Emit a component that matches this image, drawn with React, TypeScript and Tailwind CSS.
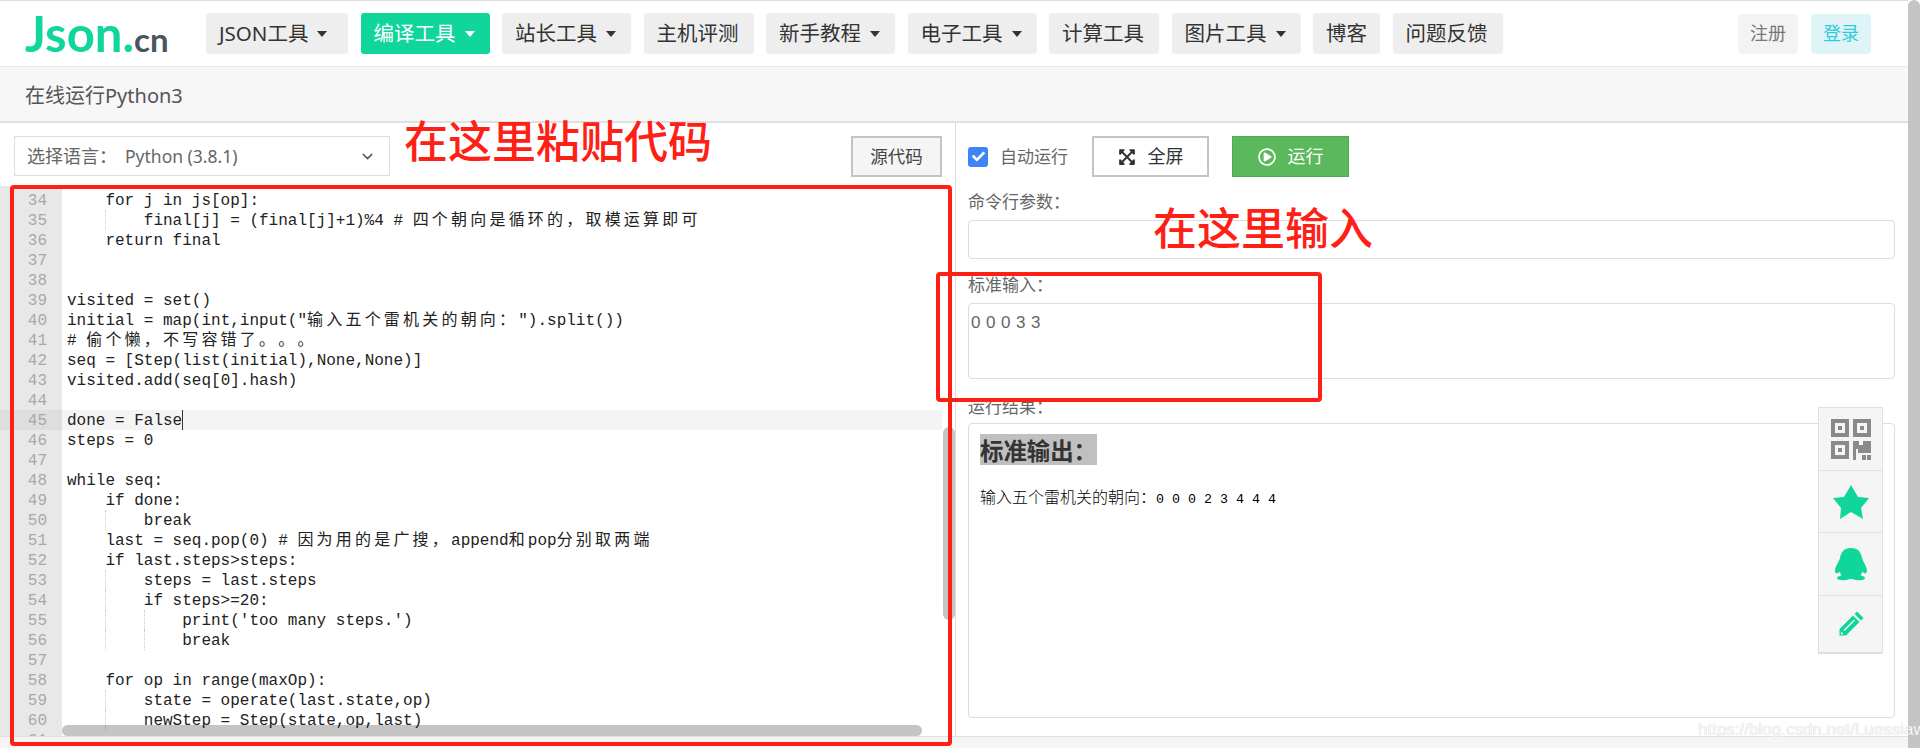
import { FaExpandArrowsAlt, FaRegPlayCircle, FaCheck } from "react-icons/fa";
import { ChevronDown } from "lucide-react";

const NAV = [
  { label: "JSON工具", caret: true, width: "w-[142px]" },
  { label: "编译工具", caret: true, active: true, width: "w-[129px]" },
  { label: "站长工具", caret: true, width: "w-[129px]" },
  { label: "主机评测", width: "w-[110px]" },
  { label: "新手教程", caret: true, width: "w-[129px]" },
  { label: "电子工具", caret: true, width: "w-[129px]" },
  { label: "计算工具", width: "w-[110px]" },
  { label: "图片工具", caret: true, width: "w-[129px]" },
  { label: "博客", width: "w-[67px]" },
  { label: "问题反馈", width: "w-[110px]" },
];

const CODE = [
  "    final = state.copy()",
  "    for j in js[op]:",
  "        final[j] = (final[j]+1)%4 # 四个朝向是循环的，取模运算即可",
  "    return final",
  "",
  "",
  "visited = set()",
  'initial = map(int,input("输入五个雷机关的朝向：").split())',
  "# 偷个懒，不写容错了。。。",
  "seq = [Step(list(initial),None,None)]",
  "visited.add(seq[0].hash)",
  "",
  "done = False",
  "steps = 0",
  "",
  "while seq:",
  "    if done:",
  "        break",
  "    last = seq.pop(0) # 因为用的是广搜，append和pop分别取两端",
  "    if last.steps>steps:",
  "        steps = last.steps",
  "        if steps>=20:",
  "            print('too many steps.')",
  "            break",
  "",
  "    for op in range(maxOp):",
  "        state = operate(last.state,op)",
  "        newStep = Step(state,op,last)",
  "",
];

function CodeText({ text }: { text: string }) {
  const parts = text.split(/([\u3000-\u9fff\uff00-\uffef]+)/);
  return (
    <>
      {parts.map((part, i) =>
        i % 2 === 1 ? (
          <span
            key={i}
            className="font-['Noto_Sans_CJK_SC',sans-serif] leading-none tracking-[3.2px] [text-spacing-trim:space-all]"
          >
            {part}
          </span>
        ) : (
          <span key={i}>{part}</span>
        ),
      )}
    </>
  );
}

function CodeLine({ num, text }: { num: number; text: string }) {
  const active = num === 45;
  const indent = text.length - text.trimStart().length;
  const levels = Math.floor(indent / 4);
  return (
    <div className={`flex h-5 leading-[22px] ${active ? "bg-[#f4f4f4]" : ""}`}>
      <div
        className={`h-5 w-[62px] flex-none overflow-hidden pr-[15px] text-right text-[#a8a8a8] ${
          active ? "bg-[#dedede]" : "bg-[#e8e8e8]"
        }`}
      >
        {num}
      </div>
      <div className="h-5 overflow-hidden whitespace-pre pl-[5px] text-[#222]">
        {Array.from({ length: levels }).map((_, i) => (
          <span
            key={i}
            className={`inline-block h-5 w-[38.4px] align-top ${
              i > 0 ? "border-l border-dotted border-[#c8c8c8]" : ""
            }`}
          />
        ))}
        <CodeText text={text.trimStart()} />
        {active && <span className="inline-block h-5 w-px bg-[#333] align-top" />}
      </div>
    </div>
  );
}

function Caret({ active }: { active?: boolean }) {
  return (
    <span
      className={`ml-[9px] inline-block border-x-[5px] border-t-[6px] border-x-transparent ${
        active ? "border-t-white" : "border-t-[#333]"
      }`}
    />
  );
}

function QrIcon() {
  return (
    <svg width="41" height="41" viewBox="0 0 41 41" fill="#8a8a8a">
      <path d="M1 0h18v18H1zM5 4v10h10V4z" fillRule="evenodd" />
      <rect x="8" y="7" width="4" height="4" />
      <path d="M23 0h18v18H23zM27 4v10h10V4z" fillRule="evenodd" />
      <rect x="30" y="7" width="4" height="4" />
      <path d="M1 22h18v18H1zM5 26v10h10V26z" fillRule="evenodd" />
      <rect x="8" y="29" width="4" height="4" />
      <path d="M23 22h6v4h4v-4h8v12H28v-4h-2v11h-3z" />
      <rect x="32" y="36" width="4" height="5" />
      <rect x="37" y="36" width="4" height="5" />
    </svg>
  );
}

function StarIcon() {
  return (
    <svg width="36" height="34" viewBox="0 0 36 34" fill="#10d69c">
      <polygon points="18,0 25,12 36,13 28,23 30,34 18,27 7,34 8,23 0,13 11,12" />
    </svg>
  );
}

function PenguinIcon() {
  return (
    <svg width="32" height="33" viewBox="0 0 32 33" fill="#10d69c">
      <path d="M16 0C23 0 26 4 27 10C28 14 32 18 32 23C32 26 29 26 27 23.500C27 25 26.500 26.500 25.500 27.500C28 28 30 28.500 30 30C30 32 25 32.500 21 32C19 31.500 17 31 16 31C15 31 13 31.500 11 32C7 32.500 2 32 2 30C2 28.500 4 28 6.500 27.500C5.500 26.500 5 25 5 23.500C3 26 0 26 0 23C0 18 4 14 5 10C6 4 9 0 16 0Z" />
    </svg>
  );
}

function PencilIcon() {
  return (
    <svg width="26" height="26" viewBox="0 0 26 26" fill="#10d69c">
      <path d="M19 0.5 25.5 7 23 9.5 16.500 3z" />
      <path d="M15 4.500 21.500 11 8 24.500H1.500V18zM16 8.500 5.500 19 6.500 20 17 9.500z" fillRule="evenodd" />
      <path d="M3 20.500 5.500 23 3 23.500z" fill="#f5f5f5" />
    </svg>
  );
}

function FormLabel({ children, className }: { children: string; className: string }) {
  return <div className={`h-6 text-[17px] leading-6 text-[#666] ${className}`}>{children}</div>;
}

export default function App() {
  return (
    <div className="relative flex h-[748px] w-[1920px] overflow-hidden bg-white font-['Noto_Sans','Noto_Sans_CJK_SC',sans-serif]">
      <div className="flex min-w-0 flex-1 flex-col">
        <header className="flex h-[67px] flex-none items-center border-y border-t-[#dddddd] border-b-[#e4eaf0] pl-[25px] pr-[37px]">
          <div className="w-[181px] flex-none whitespace-nowrap font-['Lato',sans-serif] font-bold leading-none text-[#10d69c]">
            <span className="text-[49px]">Json.</span>
            <span className="text-[33px] text-[#4a5560]">cn</span>
          </div>
          <nav className="flex gap-[12.500px]">
            {NAV.map((item) => (
              <div
                key={item.label}
                className={`flex h-[41px] items-center rounded-[3px] pl-[13px] text-[20.5px] ${item.width} ${
                  item.active ? "bg-[#10d69c] text-white" : "bg-[#eeeeee] text-[#333]"
                }`}
              >
                {item.label}
                {item.caret && <Caret active={item.active} />}
              </div>
            ))}
          </nav>
          <div className="ml-auto flex gap-[13px] text-[18px]">
            <div className="flex h-10 w-[60px] items-center justify-center rounded-[4px] bg-[#f3f3f3] text-[#777]">注册</div>
            <div className="flex h-10 w-[60px] items-center justify-center rounded-[4px] bg-[#def4f7] text-[#2fcbdc]">登录</div>
          </div>
        </header>

        <div className="flex h-14 flex-none items-center border-b-2 border-[#e0e0e0] bg-[#f7f7f7] pl-[25px] pt-[3px] text-[20px] text-[#555]">
          在线运行Python3
        </div>

        <main className="flex min-h-0 flex-1">
          <section className="flex w-[956px] flex-none flex-col border-r border-[#dddddd]">
            <div className="flex justify-between pl-[14px] pr-[13px] pt-[13px]">
              <div className="flex h-10 w-[376px] items-center border border-[#dddddd] pl-3 pr-[13px] text-[18px] text-[#666]">
                <span className="w-[98px]">选择语言：</span>
                <span className="flex-1 text-[17.5px]">Python (3.8.1)</span>
                <ChevronDown size={17} strokeWidth={2} className="text-[#555]" />
              </div>
              <div className="flex h-[41px] w-[91px] items-center justify-center border-2 border-[#c4c4c4] bg-[#f5f5f5] text-[17.5px] text-[#444]">
                源代码
              </div>
            </div>
            <div className="relative mt-[9px] h-[551px] overflow-hidden font-['Liberation_Mono','Noto_Sans_CJK_SC',monospace] text-[16px]">
              <div className="-mt-4 w-[942px]">
                {CODE.map((line, i) => (
                  <CodeLine key={i} num={33 + i} text={line} />
                ))}
              </div>
              <div className="absolute right-0 top-[241px] h-[193px] w-3 rounded-full bg-black/[0.23]" />
              <div className="absolute bottom-0 left-[62px] h-[11px] w-[860px] rounded-full bg-black/[0.23]" />
            </div>
          </section>

          <section className="min-w-0 flex-1 pl-3 pr-[13px] pt-[13px]">
            <div className="flex h-[41px] items-center">
              <span className="flex h-5 w-5 items-center justify-center rounded-[3px] bg-[#3d85f5] text-white">
                <FaCheck size={13} />
              </span>
              <span className="ml-3 w-[92px] text-[17px] text-[#666]">自动运行</span>
              <div className="flex h-[41px] w-[117px] items-center justify-center gap-3 border-2 border-[#c4c4c4] text-[18px] text-[#333]">
                <FaExpandArrowsAlt size={18} />
                全屏
              </div>
              <div className="ml-[23px] flex h-[41px] w-[117px] items-center justify-center gap-3 border border-[#4cae4c] bg-[#5cb85c] text-[18px] text-white">
                <FaRegPlayCircle size={18} />
                运行
              </div>
            </div>
            <FormLabel className="mt-[13px]">命令行参数：</FormLabel>
            <div className="mt-[6px] h-[39px] rounded-[4px] border border-[#dddddd]" />
            <FormLabel className="mt-[14px]">标准输入：</FormLabel>
            <div className="mt-[6px] h-[76px] rounded-[4px] border border-[#dddddd] pl-[2px] pt-[6px] font-['Liberation_Sans',sans-serif] text-[17px] tracking-[0.4px] text-[#666]">
              0 0 0 3 3
            </div>
            <FormLabel className="mt-4">运行结果：</FormLabel>
            <div className="mt-1 h-[295px] rounded-[4px] border border-[#dddddd] pl-[11px] pt-[10px]">
              <div className="inline-block h-[31px] bg-[#c0c0c0] text-[23.4px] font-bold leading-[34px] text-[#333]">
                标准输出：
              </div>
              <div className="mt-5 font-['Noto_Sans_CJK_SC',sans-serif] text-[16px] font-light leading-5 text-black">
                输入五个雷机关的朝向：
                <span className="font-['Liberation_Mono',monospace] text-[13.33px]">0 0 0 2 3 4 4 4</span>
              </div>
            </div>
          </section>
        </main>

        <div className="h-3 flex-none border-t border-[#e0e0e0] bg-[#f5f5f5]" />
      </div>

      <div className="w-3 flex-none rounded-t-md bg-[#c4c4c4]" />

      {/* page overlays: annotations drawn on top of the screenshot */}
      <div className="pointer-events-none absolute left-[404px] top-[117px] text-[44px] font-medium leading-[48px] text-[#ff2015]">在这里粘贴代码</div>
      <div className="pointer-events-none absolute left-[1153px] top-[204px] text-[44px] font-medium leading-[48px] text-[#ff2015]">在这里输入</div>
      <div className="pointer-events-none absolute left-[10px] top-[185px] h-[561px] w-[942px] rounded-[4px] border-4 border-[#ff2015]" />
      <div className="pointer-events-none absolute left-[936px] top-[272px] h-[130px] w-[386px] rounded-[4px] border-4 border-[#ff2015]" />

      <div className="absolute left-[1818px] top-[407px] flex w-[65px] flex-col border-x border-t border-b-2 border-[#e0e0e0] bg-[#f5f5f5]">
        <div className="flex h-[63px] items-center justify-center border-b border-[#e0e0e0]"><QrIcon /></div>
        <div className="flex h-[62px] items-center justify-center border-b border-[#e0e0e0]"><StarIcon /></div>
        <div className="flex h-[63px] items-center justify-center border-b border-[#e0e0e0]"><PenguinIcon /></div>
        <div className="flex h-[56px] items-center justify-center"><PencilIcon /></div>
      </div>

      <div className="absolute left-[1698px] top-[719px] font-['Liberation_Sans',sans-serif] text-[17px] leading-[22px] text-[#f8f8f8] [text-shadow:0_0_1px_#c0c0c0]">
        https://blog.csdn.net/Luessiaw
      </div>
    </div>
  );
}
